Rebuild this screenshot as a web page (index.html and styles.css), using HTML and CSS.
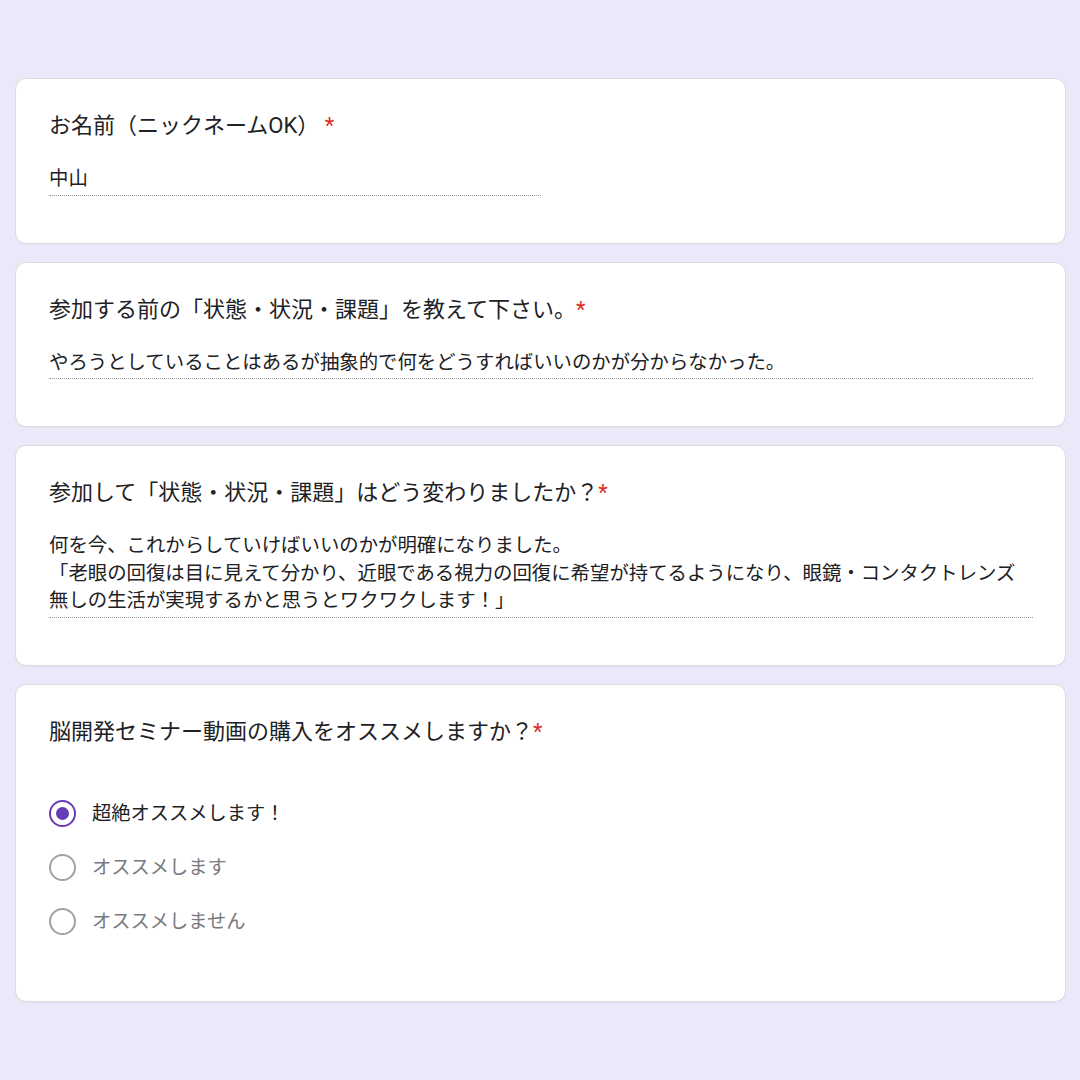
FILE: index.html
```html
<!DOCTYPE html>
<html lang="ja">
<head>
<meta charset="utf-8">
<title>フォーム回答</title>
<link rel="stylesheet" href="styles.css">
</head>
<body>
<main class="form">
  <section class="card">
    <div class="title">お名前（ニックネームOK） <span class="req">*</span></div>
    <div class="answer short">中山</div>
  </section>
  <section class="card">
    <div class="title">参加する前の「状態・状況・課題」を教えて下さい。<span class="req">*</span></div>
    <div class="answer">やろうとしていることはあるが抽象的で何をどうすればいいのかが分からなかった。</div>
  </section>
  <section class="card">
    <div class="title">参加して「状態・状況・課題」はどう変わりましたか？<span class="req">*</span></div>
    <div class="answer">何を今、これからしていけばいいのかが明確になりました。<br>「老眼の回復は目に見えて分かり、近眼である視力の回復に希望が持てるようになり、眼鏡・コンタクトレンズ無しの生活が実現するかと思うとワクワクします！」</div>
  </section>
  <section class="card">
    <div class="title">脳開発セミナー動画の購入をオススメしますか？<span class="req">*</span></div>
    <div class="options">
      <div class="option selected"><span class="radio"></span><span class="label">超絶オススメします！</span></div>
      <div class="option"><span class="radio"></span><span class="label">オススメします</span></div>
      <div class="option"><span class="radio"></span><span class="label">オススメしません</span></div>
    </div>
  </section>
</main>
</body>
</html>
```

FILE: styles.css
```css
html, body {
  margin: 0;
  padding: 0;
}
body {
  background: #ede8f9;
  font-family: Roboto, "Noto Sans CJK JP", sans-serif;
  color: #202124;
  width: 1080px;
  height: 1080px;
  overflow: hidden;
}
.form {
  display: flex;
  flex-direction: column;
  gap: 18px;
  padding: 78px 14px 0 15px;
}
.card {
  background: #ffffff;
  border: 1px solid #dadce0;
  border-radius: 11px;
  padding: 32px 32px 47px 33px;
  box-shadow: 0 1px 1px rgba(0, 0, 0, 0.03);
}
.title {
  font-size: 22px;
  line-height: 30px;
  color: #202124;
}
.req {
  color: #d93025;
}
.answer {
  margin-top: 24px;
  font-size: 19.4px;
  line-height: 27.5px;
  padding-bottom: 2px;
  border-bottom: 1px dotted rgba(0, 0, 0, 0.4);
}
.answer.short {
  width: 50%;
}
.options {
  margin-top: 40px;
  padding-bottom: 5px;
  display: flex;
  flex-direction: column;
}
.option {
  height: 54px;
  display: flex;
  align-items: center;
  gap: 16px;
}
.radio {
  box-sizing: border-box;
  width: 27px;
  height: 27px;
  border: 2px solid #9ea1a8;
  border-radius: 50%;
  display: flex;
  align-items: center;
  justify-content: center;
  flex: none;
}
.option.selected .radio {
  border-color: #673ab7;
}
.option.selected .radio::after {
  content: "";
  width: 13px;
  height: 13px;
  border-radius: 50%;
  background: #673ab7;
}
.label {
  font-size: 19.25px;
  line-height: 26px;
  color: #787a80;
}
.option.selected .label {
  color: #202124;
}
```
